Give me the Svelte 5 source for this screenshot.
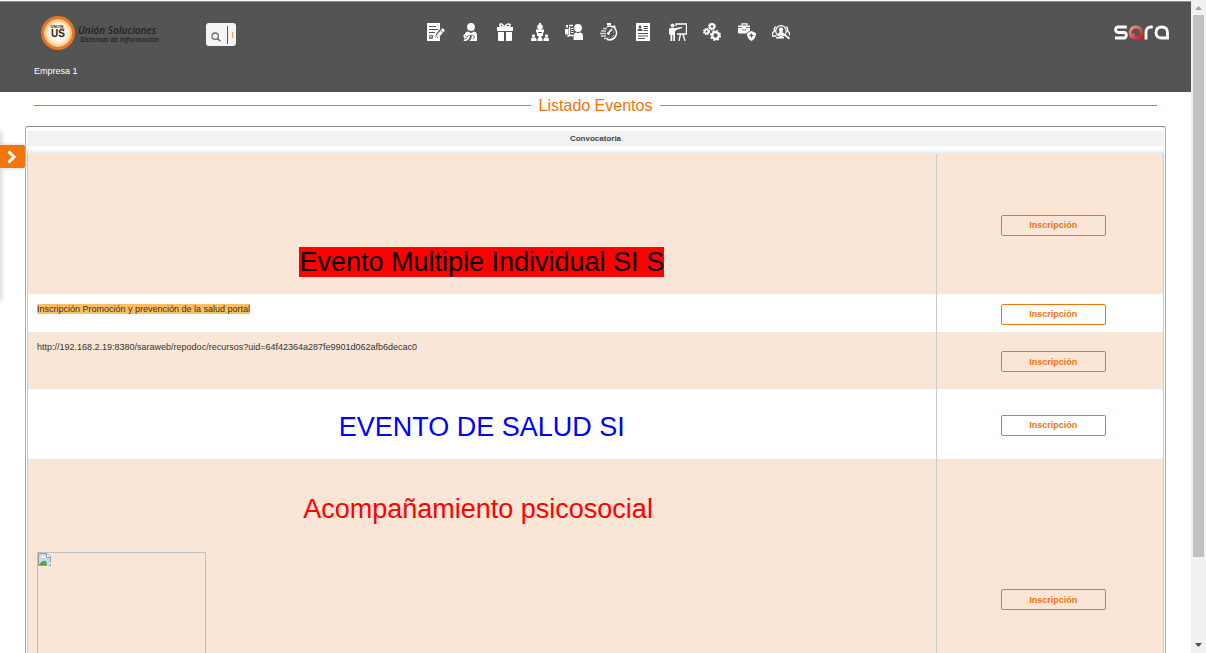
<script>
  const icons = [
    {
      name: 'Encuestas',
      art: '<path d="M0 0h13v6l-4 5-1 4 4-1 1-1v5H0z"/><path d="M2 3.500h7M2 6.500h9M2 9.500h6" stroke="#545454" stroke-width="1.200"/><path d="M2.500 12.500h3v3h-3zM3 14l1 1 2-3" fill="none" stroke="#545454" stroke-width=".8"/><path d="M15.500 5l2.500 2.300-7.200 8.200-3 1.200.7-3.300z"/><path d="M13.500 7.500l2.300 2M9 13l2 2" stroke="#545454" stroke-width=".8"/>'
    },
    {
      name: 'Bienestar',
      art: '<circle cx="9" cy="4" r="3.900"/><path d="M3 10.500q1-2 3-2l3 1.500 3-1.500q3 .5 3 4v5.500H7.500q3-3 2-6-3-.8-6 1z"/><path d="M1 12.500q3-3 6-1.500 2 3-.5 5.500-2 2-5 1.500l1-2-1-3z"/><path d="M3 12.500l2 1.500 2-2M2.500 16l2.500-1M9.500 12l3.500 2-2.500 2" fill="none" stroke="#545454" stroke-width=".7"/>'
    },
    {
      name: 'Beneficios',
      art: '<path d="M1 4h7v4H1zM10 4h7v4h-7zM2 9h6v9H3q-1 0-1-1zM10 9h6v8q0 1-1 1h-5z"/><path d="M8 4Q3 4 4 1.500 5.500-.5 8.500 4 11.500-.5 14 1.500 15 4 10 4" fill="none" stroke="#fff" stroke-width="1.500"/><path d="M8 4h2v4H8z"/>'
    },
    {
      name: 'Estructura',
      art: '<circle cx="9" cy="4" r="2.800"/><path d="M8 0h2v2H8zM5 6.500h8v3h-1v3.500H6V9.500H5z"/><path d="M7 9.500h4" stroke="#545454"/><circle cx="2.500" cy="12.800" r="1.600"/><circle cx="15.500" cy="12.800" r="1.600"/><circle cx="9" cy="14" r="1.600"/><path d="M0 18v-2l1-1.500h3L5.500 16v2zM6.500 18v-2l1-1h3l1 1v2zM12.500 18v-2l1.500-1.500h3l1 1.500v2z"/>'
    },
    {
      name: 'Evaluaciones',
      art: '<circle cx="13" cy="5" r="3.900"/><path d="M8.500 17v-4q0-3.500 3-3.500l1.500 1 1.500-1q3.500 0 3.500 4V17z"/><path d="M4 2.500h4M4.500 4v8.500h4" fill="none" stroke="#fff" stroke-width="1.300"/><path d="M6 5.500h2.500M6 7.500h2.500M6 9.500h2.500" stroke="#fff"/><path d="M0 6h3.500v5.500H0zM1 2h2v2.500H1zM1 13l3-1v2z"/>'
    },
    {
      name: 'Tiempos',
      art: '<path d="M7 0h4v2H7zM14 2l2 2-1 1-2-1z"/><path d="M7 3.500q4-1.500 7.500 1.500 3.500 4 1 8.500-3 4.500-8.500 3" fill="none" stroke="#fff" stroke-width="1.500"/><path d="M8 10.500l4-4.500" stroke="#fff" stroke-width="1.700"/><circle cx="8.500" cy="10.500" r="1.400"/><path d="M3 5.500h4M1 8h5M0 10.500h6M1 13h5M4 15.500h4" stroke="#fff" stroke-width="1.700" opacity=".75"/><path d="M12 14l2-2M13 9h1M9 14v1" stroke="#fff" stroke-width=".7"/>'
    },
    {
      name: 'Hoja de vida',
      art: '<path d="M2 0h14v18H2z"/><circle cx="6" cy="4" r="1.400" fill="#545454"/><path d="M3.500 8q0-2.500 2.500-2.500T8.500 8z" fill="#545454"/><path d="M9.500 3.500H14M9.500 5.500H14M9.500 7.500H14M4 10.500h10M4 13h10M4 15.500h7" stroke="#545454"/>'
    },
    {
      name: 'Capacitación',
      art: '<circle cx="3.500" cy="2.500" r="2"/><path d="M1 5h5l7-1 .5 1-6.500 2v1L6 8v10H4.300v-6h-1v6H1.500v-6L0 11V6z"/><path d="M7 3V1h10.500v10H8" fill="none" stroke="#fff" stroke-width="1.300"/><path d="M11.500 11L10 18M14 11l2 7" stroke="#fff" stroke-width="1.300"/>'
    },
    {
      name: 'Procesos',
      art: '<g fill="none" stroke="#fff"><circle cx="9" cy="3.500" r="2.300" stroke-width="1.900"/><circle cx="9" cy="3.500" r="3.300" stroke-width="1.200" stroke-dasharray="1.400 1.200"/><circle cx="3.500" cy="8.500" r="2" stroke-width="1.800"/><circle cx="3.500" cy="8.500" r="3" stroke-width="1.200" stroke-dasharray="1.300 1.100"/><circle cx="12.500" cy="12.500" r="3.300" stroke-width="2.300"/><circle cx="12.500" cy="12.500" r="4.800" stroke-width="1.500" stroke-dasharray="2 1.770"/></g>'
    },
    {
      name: 'Salud ocupacional',
      art: '<path d="M0 2.500h12V8q-3 .5-4 2.500H1q-1 0-1-1z"/><path d="M4 2.500V.8h5v1.700" fill="none" stroke="#fff" stroke-width="1.300"/><path d="M0 4.500h4M8 4.500h4M4 6l2 1.500L8 6" fill="none" stroke="#545454" stroke-width=".8"/><path d="M13.500 8l4.500 2q0 6-4.500 8Q9 16 9 10z"/><path d="M13.500 10.500v4M11.500 12.500h4" stroke="#545454" stroke-width="1.200"/>'
    },
    {
      name: 'Selección',
      art: '<circle cx="9" cy="8" r="5.300" fill="none" stroke="#fff" stroke-width="1.300"/><ellipse cx="9" cy="6.800" rx="2.100" ry="2.600"/><path d="M5.500 11q1-2 3.500-2t3.500 2q-3.500 3-7 0zM13 11l5 4-1 1.500-5-4z"/><path d="M4 3.500q-2.500 1-1.500 4.500L.5 10v3h4M14 3.500q2.500 1 1.500 4.500l2 2v2.500" fill="none" stroke="#fff" stroke-width="1.300"/><path d="M4 14h8v1.500H4z"/>'
    }
  ];

  const events = [
    { text: 'Evento Multiple Individual SI S', kind: 'red-mark' },
    { text: 'Inscripción Promoción y prevención de la salud portal', kind: 'amber-mark' },
    { text: 'http://192.168.2.19:8380/saraweb/repodoc/recursos?uid=64f42364a287fe9901d062afb6decac0', kind: 'plain' },
    { text: 'EVENTO DE SALUD SI', kind: 'blue' },
    { text: 'Acompañamiento psicosocial\u00a0', kind: 'picture' }
  ];

  let query = $state('');
</script>

<div class="window">
  <div class="page">
    <header>
      <div class="bar">
        <div class="left">
          <a class="brand" href="#inicio" aria-label="Unión Soluciones Sistemas de Información">
            <svg width="34" height="34" viewBox="0 0 34 34">
              <defs>
                <radialGradient id="disc">
                  <stop offset=".55" stop-color="#fffaf0" />
                  <stop offset=".85" stop-color="#fbe3b0" />
                  <stop offset="1" stop-color="#f4a54a" />
                </radialGradient>
              </defs>
              <circle cx="17" cy="17" r="17" fill="#ea7424" />
              <circle cx="17" cy="17" r="13.600" fill="url(#disc)" stroke="#fbd9a0" stroke-width=".8" />
              <text x="16" y="12" class="mark small">UNION</text>
              <text x="17" y="21" class="mark">US</text>
              <path d="M19.500 12.700h4" stroke="#e33" stroke-width=".8" />
            </svg>
            <span class="words"><span class="name">Unión Soluciones</span><span class="tag">Sistemas de Información</span></span>
          </a>
          <label class="search">
            <svg width="10" height="10" viewBox="0 0 10 10" fill="none" stroke="#707070">
              <circle cx="4.200" cy="4.200" r="3.200" stroke-width="1.300" />
              <path d="M6.500 6.500L9.300 9.300" stroke-width="1.600" />
            </svg>
            <input type="text" aria-label="Buscar" bind:value={query} />
            <i></i>
          </label>
        </div>
        <nav>
          {#each icons as icon}
            <a href="#modulo" aria-label={icon.name}>
              <svg width="18" height="18" viewBox="0 0 18 18" fill="#fff">{@html icon.art}</svg>
            </a>
          {/each}
        </nav>
        <svg class="sara" width="55" height="15" viewBox="0 0 55 15" fill="none" stroke="#fff" stroke-width="2.800" role="img" aria-label="sara">
          <defs>
            <linearGradient id="drop" x1="0" x2="1" y1="0" y2="1">
              <stop stop-color="#f5988a" />
              <stop offset="1" stop-color="#cf1c1c" />
            </linearGradient>
          </defs>
          <path d="M12.800 2H4.200Q1.500 2 1.500 4.600T4.200 7.500h5.600q2.500 0 2.500 2.700T9.800 13H1" />
          <path d="M17.600 12Q15.900 10 16.200 7 17 2 22 2t5.500 5v6H22q-2.500 0-4.400-1l3-3" stroke="url(#drop)" />
          <path d="M32 14.400V7.500Q32 2 37 2h1.800" />
          <path d="M53.500 14.400V7.500Q53.500 2 47.800 2T42 7.500 47.800 13h5.700" />
        </svg>
      </div>
      <div class="company">Empresa 1</div>
    </header>

    <main>
      <h1>Listado Eventos</h1>
      <section class="frame">
        <table>
          <colgroup><col class="wide" /><col /></colgroup>
          <thead>
            <tr><th colspan="2"><span>Convocatoria</span></th></tr>
          </thead>
          <tbody>
            {#each events as event}
              <tr class={event.kind}>
                <td class="text">
                  <span class="label">{event.text}</span>
                  {#if event.kind === 'picture'}
                    <div class="missing">
                      <svg width="14" height="14" viewBox="0 0 14 14">
                        <path d="M.5.500h8.500l3.500 3.500v8.500H.5z" fill="#c6d9f5" stroke="#969ba0" />
                        <path d="M3 5q0-2 2-2 2-1 3 2z" fill="#fff" />
                        <path d="M1 12Q4 7 8 8l1 4z" fill="#52aa32" />
                        <path d="M8.500.5v4h4" fill="#fff" stroke="#969ba0" />
                        <path d="M13 8.500L8.500 13H10l3-2.500z" fill="#fae6d6" />
                      </svg>
                    </div>
                  {/if}
                </td>
                <td class="action"><button type="button">Inscripción</button></td>
              </tr>
            {/each}
          </tbody>
        </table>
      </section>
    </main>
  </div>

  <div class="scroll" aria-hidden="true">
    <svg width="15" height="15" viewBox="0 0 15 15"><path d="M4 10h7L7.500 6z" fill="#a3a3a3" /></svg>
    <div class="track"><div class="thumb"></div></div>
    <svg width="15" height="15" viewBox="0 0 15 15"><path d="M4 5h7L7.500 9z" fill="#505050" /></svg>
  </div>

  <div class="drawer">
    <button type="button" aria-label="Abrir panel">
      <svg width="10" height="14" viewBox="0 0 10 14"><path d="M1.500 1.500L7 7l-5.500 5.500" fill="none" stroke="#fff" stroke-width="3" /></svg>
    </button>
  </div>
</div>

<style>
  :global(body) {
    margin: 0;
    background: #fff;
  }
  .window {
    position: relative;
    display: flex;
    height: 100vh;
    overflow: hidden;
    font-family: "Liberation Sans", Arial, sans-serif;
    font-size: 9px;
    color: #333;
  }
  .page {
    flex: 1;
    min-width: 0;
    padding-top: 1px;
  }
  header {
    box-sizing: border-box;
    height: 91px;
    background: #545454;
    border-top: 1px solid #ee7417;
  }
  .bar {
    display: grid;
    grid-template-columns: 1fr 363px 1fr;
    align-items: center;
    height: 60px;
    padding: 0 15px 0 41px;
  }
  .left {
    display: flex;
    align-items: center;
    gap: 45px;
    padding-top: 4px;
  }
  .brand {
    display: flex;
    align-items: center;
    gap: 3px;
    width: 120px;
    text-decoration: none;
    color: #222;
  }
  .brand svg {
    flex: none;
    margin-bottom: 2px;
  }
  .mark {
    font: bold 10px "Liberation Sans", sans-serif;
    text-anchor: middle;
    fill: #222;
  }
  .mark.small {
    font-size: 4px;
  }
  .words {
    display: flex;
    flex-direction: column;
    font-family: "Open Sans", sans-serif;
    font-style: italic;
    font-weight: 600;
    white-space: nowrap;
  }
  .name {
    font-size: 10px;
    line-height: 12px;
  }
  .tag {
    padding-left: 2px;
    font-size: 7px;
    line-height: 8px;
  }
  .search {
    display: flex;
    align-items: center;
    box-sizing: border-box;
    width: 30px;
    height: 23px;
    padding: 3px 3px 2px 5px;
    border-radius: 3px;
    background: #f4f4f4;
  }
  .search svg {
    flex: none;
    margin-top: 4px;
  }
  .search input {
    width: 0;
    min-width: 0;
    flex: 1;
    height: 18px;
    padding: 0;
    border: 0;
    border-right: 1px solid #555;
    background: none;
    outline: 0;
  }
  .search i {
    width: 1px;
    height: 6px;
    margin-left: 4px;
    background: #f0a050;
  }
  nav {
    display: flex;
    justify-content: space-between;
  }
  nav a,
  nav svg {
    display: block;
  }
  .sara {
    justify-self: end;
    margin-right: 7px;
  }
  .company {
    padding: 3px 34px;
    line-height: 12px;
    color: #fff;
  }
  h1 {
    display: flex;
    align-items: center;
    gap: 8px;
    margin: 0;
    padding: 3px 34px 0;
    font-size: 16px;
    font-weight: 400;
    line-height: 21px;
    color: #f2740d;
  }
  h1::before,
  h1::after {
    content: "";
    flex: 1;
    height: 1px;
    background: #f2740d;
  }
  .frame {
    margin: 10px 25px 0;
    padding: 4px 1px 0;
    border: 1px solid #aaa;
    border-top-color: #888;
    border-radius: 3px;
  }
  table {
    width: 100%;
    border-collapse: separate;
    border-spacing: 0;
    table-layout: fixed;
  }
  .wide {
    width: 80%;
  }
  th {
    padding: 0 0 5px;
    background: linear-gradient(#fff, #e8e8e8) bottom / 100% 5px no-repeat;
  }
  th span {
    display: block;
    background: #f2f2f2;
    border-bottom: 3px solid #fff;
    font-size: 8px;
    line-height: 15px;
    color: #444;
  }
  td {
    box-sizing: border-box;
    padding: 0 9px;
    border-right: 1px solid #ccc;
    vertical-align: top;
  }
  .text {
    border-left: 1px solid #ccc;
    line-height: 12px;
    overflow-wrap: anywhere;
  }
  .action {
    padding: 2px 9px 0 16px;
    text-align: center;
    vertical-align: middle;
    font-size: 9px;
  }
  tbody tr:nth-child(odd) {
    background: #fae6d6;
  }
  .red-mark .text,
  .blue .text,
  .picture .text {
    font-size: 27px;
    line-height: 30px;
    text-align: center;
  }
  .red-mark td {
    height: 140px;
  }
  .red-mark .text {
    padding-top: 93px;
  }
  .red-mark .label {
    background: #f00;
    color: #000;
  }
  .amber-mark td {
    height: 38px;
  }
  .amber-mark .text,
  .plain .text {
    padding-top: 9px;
  }
  .amber-mark .label {
    background: #fdbd62;
  }
  .plain td {
    height: 57px;
  }
  .blue td {
    height: 70px;
  }
  .blue .text {
    padding-top: 23px;
    color: #00f;
  }
  .picture td {
    height: 279px;
  }
  .picture .text {
    padding-top: 35px;
    color: #f00;
  }
  .missing {
    box-sizing: border-box;
    width: 169px;
    height: 169px;
    margin-top: 28px;
    border: 1px solid #c0c0c0;
    line-height: 0;
    text-align: left;
  }
  .action button {
    width: 105px;
    height: 21px;
    padding: 0;
    border: 1px solid #f2740d;
    border-radius: 2px;
    background: none;
    font: bold 9px "Liberation Sans", Arial, sans-serif;
    color: #f2740d;
    vertical-align: middle;
  }
  .scroll {
    display: flex;
    flex-direction: column;
    width: 15px;
    background: #f1f1f1;
  }
  .scroll svg {
    flex: none;
  }
  .track {
    flex: 1;
    padding: 0 2px;
  }
  .thumb {
    height: 87%;
    background: #c1c1c1;
  }
  .drawer {
    position: absolute;
    top: 132px;
    left: -10px;
    width: 10px;
    height: 168px;
    box-shadow: 0 0 6px #bbb;
  }
  .drawer button {
    position: absolute;
    top: 13px;
    left: 10px;
    display: flex;
    align-items: center;
    width: 25px;
    height: 23px;
    padding: 0 0 0 7px;
    border: 0;
    border-radius: 0 2px 2px 0;
    background: #f2740d;
    box-shadow: 0 0 4px #ccc;
  }
</style>
